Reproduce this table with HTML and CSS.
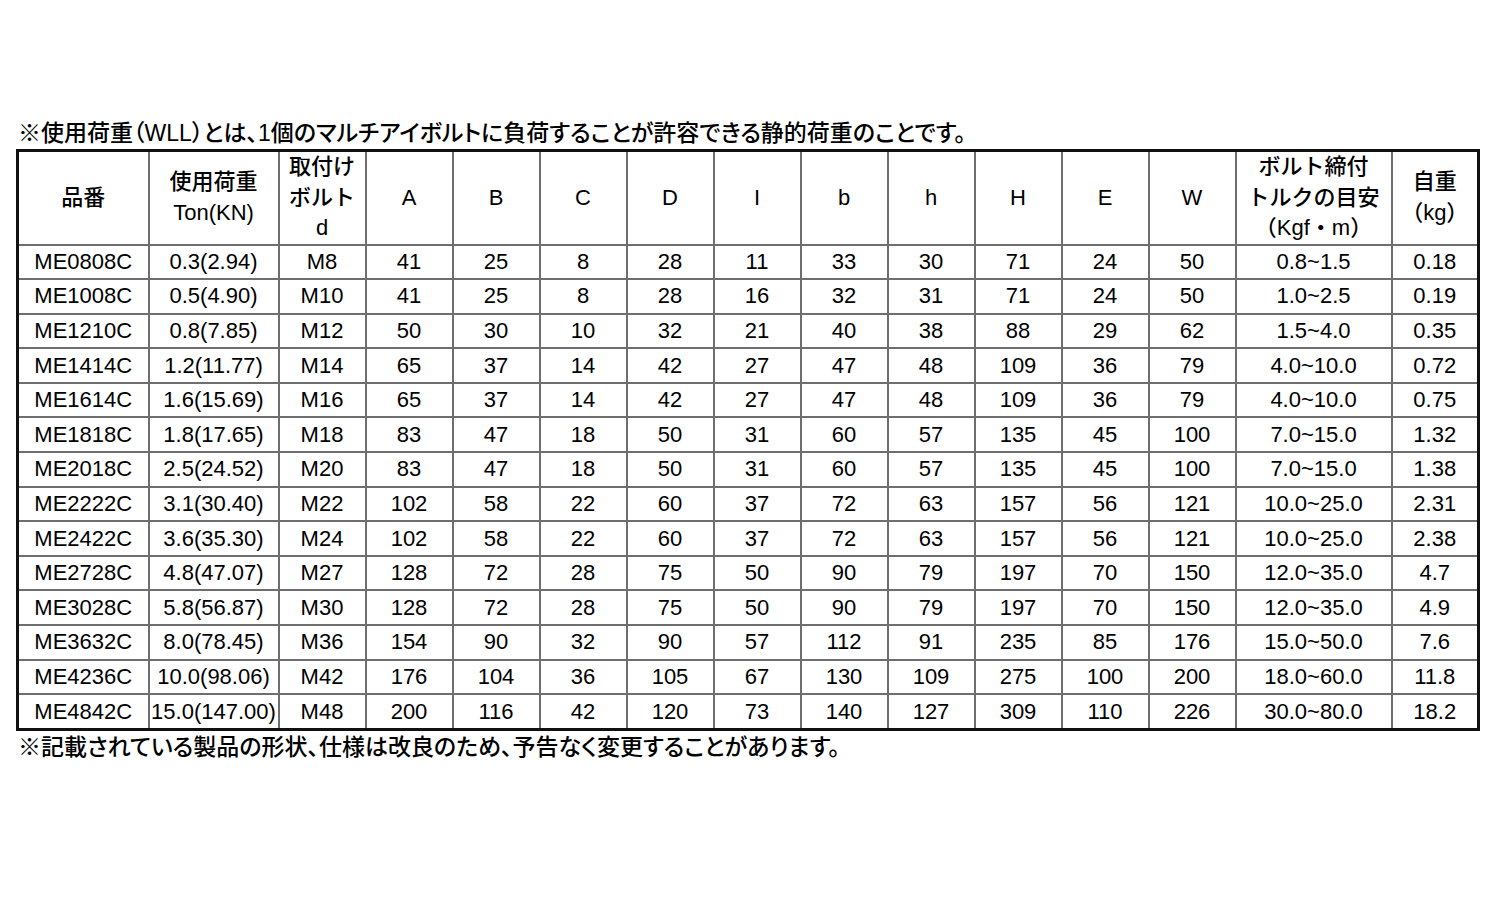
FILE: index.html
```html
<!DOCTYPE html>
<html lang="ja">
<head>
<meta charset="utf-8">
<title>マルチアイボルト 仕様表</title>
<link rel="stylesheet" href="styles.css">
</head>
<body>
<div class="page">
  <p class="note">※使用荷重（WLL）とは、1個のマルチアイボルトに負荷することが許容できる静的荷重のことです。</p>
  <table class="spec">
    <colgroup>
      <col class="c-code"><col class="c-load"><col class="c-n"><col class="c-n"><col class="c-n"><col class="c-n"><col class="c-n"><col class="c-n"><col class="c-n"><col class="c-n"><col class="c-n"><col class="c-n"><col class="c-n"><col class="c-torque"><col class="c-n">
    </colgroup>
    <thead>
      <tr>
        <th>品番</th>
        <th>使用荷重<br>Ton(KN)</th>
        <th>取付け<br>ボルト<br>d</th>
        <th>A</th><th>B</th><th>C</th><th>D</th><th>I</th><th>b</th><th>h</th><th>H</th><th>E</th><th>W</th>
        <th>ボルト締付<br>トルクの目安<br>（Kgf・m）</th>
        <th>自重<br>（kg）</th>
      </tr>
    </thead>
    <tbody>
      <tr><td>ME0808C</td><td>0.3(2.94)</td><td>M8</td><td>41</td><td>25</td><td>8</td><td>28</td><td>11</td><td>33</td><td>30</td><td>71</td><td>24</td><td>50</td><td>0.8~1.5</td><td>0.18</td></tr>
      <tr><td>ME1008C</td><td>0.5(4.90)</td><td>M10</td><td>41</td><td>25</td><td>8</td><td>28</td><td>16</td><td>32</td><td>31</td><td>71</td><td>24</td><td>50</td><td>1.0~2.5</td><td>0.19</td></tr>
      <tr><td>ME1210C</td><td>0.8(7.85)</td><td>M12</td><td>50</td><td>30</td><td>10</td><td>32</td><td>21</td><td>40</td><td>38</td><td>88</td><td>29</td><td>62</td><td>1.5~4.0</td><td>0.35</td></tr>
      <tr><td>ME1414C</td><td>1.2(11.77)</td><td>M14</td><td>65</td><td>37</td><td>14</td><td>42</td><td>27</td><td>47</td><td>48</td><td>109</td><td>36</td><td>79</td><td>4.0~10.0</td><td>0.72</td></tr>
      <tr><td>ME1614C</td><td>1.6(15.69)</td><td>M16</td><td>65</td><td>37</td><td>14</td><td>42</td><td>27</td><td>47</td><td>48</td><td>109</td><td>36</td><td>79</td><td>4.0~10.0</td><td>0.75</td></tr>
      <tr><td>ME1818C</td><td>1.8(17.65)</td><td>M18</td><td>83</td><td>47</td><td>18</td><td>50</td><td>31</td><td>60</td><td>57</td><td>135</td><td>45</td><td>100</td><td>7.0~15.0</td><td>1.32</td></tr>
      <tr><td>ME2018C</td><td>2.5(24.52)</td><td>M20</td><td>83</td><td>47</td><td>18</td><td>50</td><td>31</td><td>60</td><td>57</td><td>135</td><td>45</td><td>100</td><td>7.0~15.0</td><td>1.38</td></tr>
      <tr><td>ME2222C</td><td>3.1(30.40)</td><td>M22</td><td>102</td><td>58</td><td>22</td><td>60</td><td>37</td><td>72</td><td>63</td><td>157</td><td>56</td><td>121</td><td>10.0~25.0</td><td>2.31</td></tr>
      <tr><td>ME2422C</td><td>3.6(35.30)</td><td>M24</td><td>102</td><td>58</td><td>22</td><td>60</td><td>37</td><td>72</td><td>63</td><td>157</td><td>56</td><td>121</td><td>10.0~25.0</td><td>2.38</td></tr>
      <tr><td>ME2728C</td><td>4.8(47.07)</td><td>M27</td><td>128</td><td>72</td><td>28</td><td>75</td><td>50</td><td>90</td><td>79</td><td>197</td><td>70</td><td>150</td><td>12.0~35.0</td><td>4.7</td></tr>
      <tr><td>ME3028C</td><td>5.8(56.87)</td><td>M30</td><td>128</td><td>72</td><td>28</td><td>75</td><td>50</td><td>90</td><td>79</td><td>197</td><td>70</td><td>150</td><td>12.0~35.0</td><td>4.9</td></tr>
      <tr><td>ME3632C</td><td>8.0(78.45)</td><td>M36</td><td>154</td><td>90</td><td>32</td><td>90</td><td>57</td><td>112</td><td>91</td><td>235</td><td>85</td><td>176</td><td>15.0~50.0</td><td>7.6</td></tr>
      <tr><td>ME4236C</td><td>10.0(98.06)</td><td>M42</td><td>176</td><td>104</td><td>36</td><td>105</td><td>67</td><td>130</td><td>109</td><td>275</td><td>100</td><td>200</td><td>18.0~60.0</td><td>11.8</td></tr>
      <tr><td>ME4842C</td><td>15.0(147.00)</td><td>M48</td><td>200</td><td>116</td><td>42</td><td>120</td><td>73</td><td>140</td><td>127</td><td>309</td><td>110</td><td>226</td><td>30.0~80.0</td><td>18.2</td></tr>
    </tbody>
  </table>
  <p class="note">※記載されている製品の形状、仕様は改良のため、予告なく変更することがあります。</p>
</div>
</body>
</html>
```

FILE: styles.css
```css
html, body {
  margin: 0;
  padding: 0;
  background: #ffffff;
}

body {
  color: #000000;
  font-family: "Liberation Sans", "Noto Sans CJK JP", sans-serif;
}

.page {
  padding: 117px 0 0 16px;
}

.note {
  margin: 0 0 0 2px;
  font-size: 23px;
  font-weight: 500;
  line-height: 32px;
  height: 32px;
  white-space: nowrap;
  font-feature-settings: "palt";
}

.spec {
  border-collapse: collapse;
  table-layout: fixed;
  width: 1463px;
  border: 3px solid #111111;
  font-size: 22px;
}

.c-code { width: 131px; }
.c-load { width: 130px; }
.c-n { width: 87px; }
.c-torque { width: 156px; }

.spec th,
.spec td {
  border: 2px solid #6e6e6e;
  padding: 0;
  text-align: center;
  vertical-align: middle;
  white-space: nowrap;
  font-weight: normal;
  overflow: visible;
}

.spec th {
  height: 88px;
  line-height: 30.5px;
  font-weight: 500;
}

.spec td {
  height: 32.6px;
  line-height: 32px;
}
```
